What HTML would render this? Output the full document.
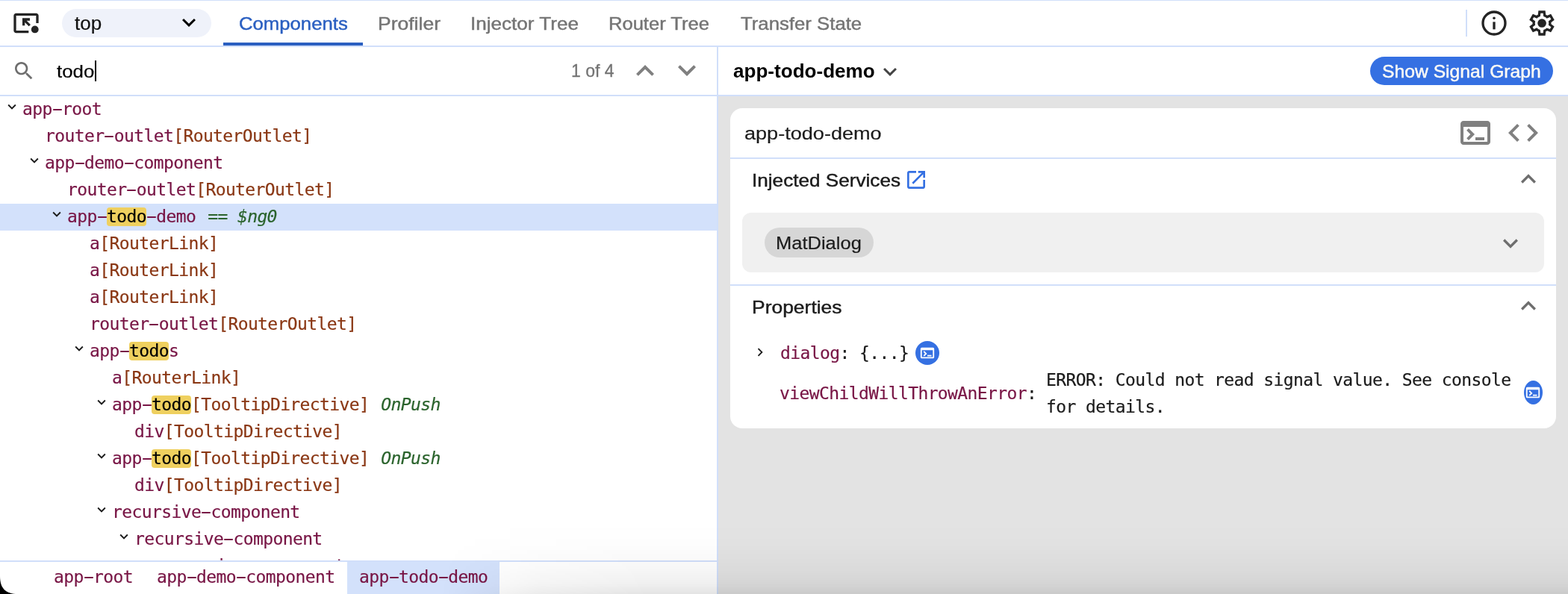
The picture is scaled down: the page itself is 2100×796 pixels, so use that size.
<!DOCTYPE html>
<html lang="en">
<head>
<meta charset="utf-8">
<title>Angular DevTools</title>
<style>
html,body{margin:0;padding:0;}
body{width:2100px;height:796px;overflow:hidden;background:#fff;position:relative;
  font-family:"Liberation Sans",sans-serif;color:#1b1b1b;}
#app{position:absolute;left:0;top:0;width:2100px;height:796px;overflow:hidden;}
.abs,.ln,.t,.m,svg.i{position:absolute;}
.ln{background:#d1dffa;}
.t{white-space:nowrap;line-height:40px;height:40px;font-size:25px;transform:translateZ(0);}
.sx{display:inline-block;transform-origin:0 50%;}
.m{white-space:nowrap;font-family:"DejaVu Sans Mono","Liberation Mono",monospace;font-size:23px;letter-spacing:-.605px;line-height:34px;height:36px;transform:translateZ(0);-webkit-text-stroke:.2px;}
.hy{display:inline-block;transform:translate(-.3px,-1px) scale(1.95,1.1);}
.el{color:#781545;}
.dir{color:#8a3714;}
.gr{color:#2a632c;font-style:italic;}
.ng{margin-left:2.76px;}
.op{margin-left:2.76px;}
.hl{color:#000;}
.hlb{position:absolute;background:#efd05f;border-radius:4px;height:25px;width:53px;}
.sel{background:#d3e1fb;}
</style>
</head>
<body>
<div id="app">

<!-- ===== top bar ===== -->
<div class="ln" style="left:0;top:0;width:2100px;height:1px"></div>
<div class="ln" style="left:0;top:61px;width:2100px;height:2px"></div>

<svg class="i" style="left:15px;top:11px" width="40" height="40" viewBox="0 0 960 960">
  <path fill="#242424" d="M160 800q-33 0-56.500-23.500T80 720V240q0-33 23.500-56.500T160 160h640q33 0 56.500 23.500T880 240v240h-80V240H160v480h400v80H160Z"/>
  <circle fill="#242424" cx="762" cy="682" r="118"/>
  <path fill="#242424" d="M360 320h240v80H496l128 128-56 56-128-128v104h-80V320Z"/>
</svg>

<div class="abs" style="left:83px;top:12px;width:200px;height:38px;border-radius:19px;background:#eff2fa"></div>
<div class="t" style="left:100px;top:11px;font-size:25px;color:#111;-webkit-text-stroke:0.2px #111;"><span class="sx" style="transform:scaleX(1.0397)">top</span></div>
<svg class="i" style="left:234.95px;top:11.8px" width="36" height="36" viewBox="0 0 24 24"><path fill="#000" d="M16.590 8.590 12 13.170 7.410 8.590 6 10l6 6 6-6z"/></svg>

<div class="t" style="left:319.59px;top:12px;font-size:24.5px;color:#2a5fc1;-webkit-text-stroke:0.45px #2a5fc1;"><span class="sx" style="transform:scaleX(1.0491)">Components</span></div>
<div class="abs" style="left:299px;top:57px;width:187px;height:4px;background:#2a5fc1"></div>
<div class="t" style="left:505.68px;top:12px;font-size:24.5px;color:#747474;-webkit-text-stroke:0.45px #747474;"><span class="sx" style="transform:scaleX(1.0818)">Profiler</span></div>
<div class="t" style="left:630.41px;top:12px;font-size:24.5px;color:#747474;-webkit-text-stroke:0.45px #747474;"><span class="sx" style="transform:scaleX(1.0644)">Injector Tree</span></div>
<div class="t" style="left:815.45px;top:12px;font-size:24.5px;color:#747474;-webkit-text-stroke:0.45px #747474;"><span class="sx" style="transform:scaleX(1.0428)">Router Tree</span></div>
<div class="t" style="left:992.14px;top:12px;font-size:24.5px;color:#747474;-webkit-text-stroke:0.45px #747474;"><span class="sx" style="transform:scaleX(1.0510)">Transfer State</span></div>

<div class="ln" style="left:1963px;top:13px;width:2px;height:36px"></div>
<svg class="i" style="left:1981px;top:11px" width="40" height="40" viewBox="0 0 960 960">
  <circle cx="480" cy="480" r="360" fill="none" stroke="#242424" stroke-width="80"/>
  <rect x="440" y="440" width="80" height="240" fill="#242424"/>
  <circle cx="480" cy="320" r="42" fill="#242424"/>
</svg>
<svg class="i" style="left:2045px;top:11px" width="40" height="40" viewBox="0 -960 960 960"><path fill="#242424" d="m370-80-16-128q-13-5-24.500-12T307-235l-119 50L78-375l103-78q-1-7-1-13.500v-27q0-6.500 1-13.500L78-585l110-190 119 50q11-8 23-15t24-12l16-128h220l16 128q13 5 24.500 12t22.500 15l119-50 110 190-103 78q1 7 1 13.500v27q0 6.500-2 13.500l103 78-110 190-118-50q-11 8-23 15t-24 12L590-80H370Zm70-80h79l14-106q31-8 57.500-23.500T639-327l99 41 39-68-86-65q5-14 7-29.500t2-31.500q0-16-2-31.500t-7-29.500l86-65-39-68-99 42q-22-23-48.500-38.500T533-694l-13-106h-79l-14 106q-31 8-57.500 23.500T321-633l-99-41-39 68 86 64q-5 15-7 30t-2 32q0 16 2 31t7 30l-86 65 39 68 99-42q22 23 48.500 38.500T427-266l13 106Zm42-180q58 0 99-41t41-99q0-58-41-99t-99-41q-59 0-99.500 41T342-480q0 58 40.500 99t99.500 41Z"/></svg>

<!-- ===== search / header row ===== -->
<div class="ln" style="left:0;top:127px;width:2100px;height:2px"></div>
<div class="ln" style="left:960px;top:63px;width:2px;height:733px"></div>

<svg class="i" style="left:16px;top:79px" width="32" height="32" viewBox="0 0 24 24"><path fill="#6e6e6e" d="M15.500 14h-.790l-.280-.270C15.410 12.590 16 11.110 16 9.500 16 5.910 13.090 3 9.500 3S3 5.910 3 9.500 5.910 16 9.500 16c1.610 0 3.090-.590 4.230-1.570l.270.280v.790l5 4.990L20.490 19l-4.990-5zm-6 0C7.010 14 5 11.990 5 9.500S7.010 5 9.500 5 14 7.010 14 9.500 11.990 14 9.500 14z"/></svg>
<div class="t" style="left:76.31px;top:76px;font-size:24px;color:#000;-webkit-text-stroke:0.2px #000;"><span class="sx" style="transform:scaleX(1.0760)">todo</span></div>
<div class="abs" style="left:127px;top:81px;width:2px;height:28px;background:#000"></div>
<div class="t" style="left:764.99px;top:75px;font-size:24px;color:#737373;-webkit-text-stroke:0.3px #737373;"><span class="sx" style="transform:scaleX(0.9559)">1 of 4</span></div>
<svg class="i" style="left:839.5px;top:71px" width="48" height="48" viewBox="0 0 24 24"><path fill="#808080" d="M12 8l-6 6 1.410 1.410L12 10.830l4.590 4.580L18 14z"/></svg>
<svg class="i" style="left:895.5px;top:69.8px" width="48" height="48" viewBox="0 0 24 24"><path fill="#808080" d="M16.590 8.590 12 13.170 7.410 8.590 6 10l6 6 6-6z"/></svg>

<div class="t" style="left:981.9px;top:75px;font-size:26.5px;font-weight:bold;color:#000;"><span class="sx" style="transform:scaleX(0.9837)">app-todo-demo</span></div>
<svg class="i" style="left:1174.35px;top:78.2px" width="36" height="36" viewBox="0 0 24 24"><path fill="#444" d="M16.590 8.590 12 13.170 7.410 8.590 6 10l6 6 6-6z"/></svg>
<div class="abs" style="left:1835px;top:76px;width:245px;height:38px;border-radius:19px;background:#3570e2"></div>
<div class="t" style="left:1850.52px;top:76px;font-size:24.5px;color:#fdfbf6;-webkit-text-stroke:0.45px #fdfbf6;"><span class="sx" style="transform:scaleX(1.0080)">Show Signal Graph</span></div>

<!-- ===== component tree ===== -->
<div class="abs" style="left:0;top:129px;width:960px;height:622px;overflow:hidden">
<svg class="i" style="left:5.4px;top:2.8px" width="22" height="22" viewBox="0 0 24 24"><path fill="#1b1b1b" d="M16.590 8.590 12 13.170 7.410 8.590 6 10l6 6 6-6z"/></svg>
<div class="m" style="left:30px;top:0px"><span class="el">app<span class="hy">-</span>root</span></div>
<div class="m" style="left:60px;top:36px"><span class="el">router<span class="hy">-</span>outlet</span><span class="dir">[RouterOutlet]</span></div>
<svg class="i" style="left:35.4px;top:74.8px" width="22" height="22" viewBox="0 0 24 24"><path fill="#1b1b1b" d="M16.590 8.590 12 13.170 7.410 8.590 6 10l6 6 6-6z"/></svg>
<div class="m" style="left:60px;top:72px"><span class="el">app<span class="hy">-</span>demo<span class="hy">-</span>component</span></div>
<div class="m" style="left:90px;top:108px"><span class="el">router<span class="hy">-</span>outlet</span><span class="dir">[RouterOutlet]</span></div>
<div class="abs sel" style="left:0;top:144px;width:960px;height:36px"></div>
<svg class="i" style="left:65.4px;top:146.8px" width="22" height="22" viewBox="0 0 24 24"><path fill="#1b1b1b" d="M16.590 8.590 12 13.170 7.410 8.590 6 10l6 6 6-6z"/></svg>
<div class="hlb" style="left:143.0px;top:149px"></div>
<div class="m" style="left:90px;top:144px"><span class="el">app<span class="hy">-</span><span class="hl">todo</span><span class="hy">-</span>demo</span> <span class="gr ng">== $ng0</span></div>
<div class="m" style="left:120px;top:180px"><span class="el">a</span><span class="dir">[RouterLink]</span></div>
<div class="m" style="left:120px;top:216px"><span class="el">a</span><span class="dir">[RouterLink]</span></div>
<div class="m" style="left:120px;top:252px"><span class="el">a</span><span class="dir">[RouterLink]</span></div>
<div class="m" style="left:120px;top:288px"><span class="el">router<span class="hy">-</span>outlet</span><span class="dir">[RouterOutlet]</span></div>
<svg class="i" style="left:95.4px;top:326.8px" width="22" height="22" viewBox="0 0 24 24"><path fill="#1b1b1b" d="M16.590 8.590 12 13.170 7.410 8.590 6 10l6 6 6-6z"/></svg>
<div class="hlb" style="left:173.0px;top:329px"></div>
<div class="m" style="left:120px;top:324px"><span class="el">app<span class="hy">-</span><span class="hl">todo</span>s</span></div>
<div class="m" style="left:150px;top:360px"><span class="el">a</span><span class="dir">[RouterLink]</span></div>
<svg class="i" style="left:125.4px;top:398.8px" width="22" height="22" viewBox="0 0 24 24"><path fill="#1b1b1b" d="M16.590 8.590 12 13.170 7.410 8.590 6 10l6 6 6-6z"/></svg>
<div class="hlb" style="left:203.0px;top:401px"></div>
<div class="m" style="left:150px;top:396px"><span class="el">app<span class="hy">-</span><span class="hl">todo</span></span><span class="dir">[TooltipDirective]</span> <span class="gr op">OnPush</span></div>
<div class="m" style="left:180px;top:432px"><span class="el">div</span><span class="dir">[TooltipDirective]</span></div>
<svg class="i" style="left:125.4px;top:470.8px" width="22" height="22" viewBox="0 0 24 24"><path fill="#1b1b1b" d="M16.590 8.590 12 13.170 7.410 8.590 6 10l6 6 6-6z"/></svg>
<div class="hlb" style="left:203.0px;top:473px"></div>
<div class="m" style="left:150px;top:468px"><span class="el">app<span class="hy">-</span><span class="hl">todo</span></span><span class="dir">[TooltipDirective]</span> <span class="gr op">OnPush</span></div>
<div class="m" style="left:180px;top:504px"><span class="el">div</span><span class="dir">[TooltipDirective]</span></div>
<svg class="i" style="left:125.4px;top:542.8px" width="22" height="22" viewBox="0 0 24 24"><path fill="#1b1b1b" d="M16.590 8.590 12 13.170 7.410 8.590 6 10l6 6 6-6z"/></svg>
<div class="m" style="left:150px;top:540px"><span class="el">recursive<span class="hy">-</span>component</span></div>
<svg class="i" style="left:155.4px;top:578.8px" width="22" height="22" viewBox="0 0 24 24"><path fill="#1b1b1b" d="M16.590 8.590 12 13.170 7.410 8.590 6 10l6 6 6-6z"/></svg>
<div class="m" style="left:180px;top:576px"><span class="el">recursive<span class="hy">-</span>component</span></div>
<svg class="i" style="left:185.4px;top:614.8px" width="22" height="22" viewBox="0 0 24 24"><path fill="#1b1b1b" d="M16.590 8.590 12 13.170 7.410 8.590 6 10l6 6 6-6z"/></svg>
<div class="m" style="left:210px;top:612px"><span class="el">recursive<span class="hy">-</span>component</span></div>
</div>

<!-- ===== breadcrumbs ===== -->
<div class="ln" style="left:0;top:751px;width:960px;height:2px"></div>
<div class="abs" style="left:465px;top:753px;width:204px;height:43px;background:#d3e1fb"></div>
<div class="m el" style="left:72px;top:756px">app<span class="hy">-</span>root</div>
<div class="m el" style="left:210px;top:756px">app<span class="hy">-</span>demo<span class="hy">-</span>component</div>
<div class="m el" style="left:481px;top:756px">app<span class="hy">-</span>todo<span class="hy">-</span>demo</div>

<!-- ===== right panel ===== -->
<div class="abs" style="left:962px;top:129px;width:1138px;height:667px;background:#e3e3e3"></div>
<div class="abs" style="left:978px;top:145px;width:1106px;height:429px;border-radius:16px;background:#fff"></div>

<div class="t" style="left:997.21px;top:159px;font-size:24.5px;color:#1b1b1b;-webkit-text-stroke:0.2px #1b1b1b;"><span class="sx" style="transform:scaleX(1.1054)">app-todo-demo</span></div>
<svg class="i" style="left:1952px;top:154px" width="48" height="48" viewBox="0 -960 960 960"><path fill="#808080" d="M160-160q-33 0-56.500-23.500T80-240v-480q0-33 23.500-56.500T160-800h640q33 0 56.500 23.500T880-720v480q0 33-23.500 56.500T800-160H160Zm0-80h640v-400H160v400Zm140-40-56-56 103-104-104-104 57-56 160 160-160 160Zm180 0v-80h240v80H480Z"/></svg>
<svg class="i" style="left:2016.2px;top:154px" width="48" height="48" viewBox="0 0 24 24"><path fill="#808080" d="M9.400 16.600 4.800 12l4.600-4.600L8 6l-6 6 6 6 1.400-1.400zm5.200 0 4.600-4.600-4.600-4.600L16 6l6 6-6 6-1.400-1.400z"/></svg>
<div class="ln" style="left:978px;top:211px;width:1106px;height:2px"></div>

<div class="t" style="left:1006.51px;top:222px;font-size:24.5px;color:#1b1b1b;-webkit-text-stroke:0.45px #1b1b1b;"><span class="sx" style="transform:scaleX(1.0668)">Injected Services</span></div>
<svg class="i" style="left:1210.5px;top:225px" width="32" height="32" viewBox="0 0 24 24"><path fill="#3570e2" d="M19 19H5V5h7V3H5c-1.110 0-2 .9-2 2v14c0 1.100.890 2 2 2h14c1.100 0 2-.9 2-2v-7h-2v7zM14 3v2h3.590l-9.830 9.830 1.410 1.410L19 6.410V10h2V3h-7z"/></svg>
<svg class="i" style="left:2027.2px;top:220px" width="40" height="40" viewBox="0 0 24 24"><path fill="#6e6e6e" d="M12 8l-6 6 1.410 1.410L12 10.830l4.590 4.580L18 14z"/></svg>

<div class="abs" style="left:994px;top:285px;width:1074px;height:80px;border-radius:12px;background:#f0f0f0"></div>
<div class="abs" style="left:1024px;top:305px;width:146px;height:40px;border-radius:20px;background:#d6d6d6"></div>
<div class="t" style="left:1039.32px;top:306px;font-size:24.5px;color:#1b1b1b;-webkit-text-stroke:0.2px #1b1b1b;"><span class="sx" style="transform:scaleX(1.0410)">MatDialog</span></div>
<svg class="i" style="left:2003px;top:306.2px" width="40" height="40" viewBox="0 0 24 24"><path fill="#6e6e6e" d="M16.590 8.590 12 13.170 7.410 8.590 6 10l6 6 6-6z"/></svg>
<div class="ln" style="left:978px;top:381px;width:1106px;height:2px"></div>

<div class="t" style="left:1006.58px;top:392px;font-size:24.5px;color:#1b1b1b;-webkit-text-stroke:0.45px #1b1b1b;"><span class="sx" style="transform:scaleX(1.0795)">Properties</span></div>
<svg class="i" style="left:2027.3px;top:389.6px" width="40" height="40" viewBox="0 0 24 24"><path fill="#6e6e6e" d="M12 8l-6 6 1.410 1.410L12 10.830l4.590 4.580L18 14z"/></svg>

<svg class="i" style="left:1007.3px;top:461px" width="22" height="22" viewBox="0 0 24 24"><path fill="#1b1b1b" d="M10 6 8.590 7.410 13.170 12l-4.580 4.590L10 18l6-6z"/></svg>
<div class="m" style="left:1045px;top:456px"><span class="el">dialog</span>: {...}</div>
<div class="abs" style="left:1226px;top:457px;width:32px;height:32px;border-radius:50%;background:#3570e2"></div>
<svg class="i" style="left:1231px;top:462px" width="22" height="22" viewBox="0 -960 960 960"><path fill="#fff" d="M160-160q-33 0-56.500-23.500T80-240v-480q0-33 23.500-56.500T160-800h640q33 0 56.500 23.500T880-720v480q0 33-23.500 56.500T800-160H160Zm0-80h640v-400H160v400Zm140-40-56-56 103-104-104-104 57-56 160 160-160 160Zm180 0v-80h240v80H480Z"/></svg>

<div class="m" style="left:1044px;top:510px"><span class="el">viewChildWillThrowAnError</span>:</div>
<div class="m" style="left:1401px;top:492px">ERROR: Could not read signal value. See console</div>
<div class="m" style="left:1401px;top:528px">for details.</div>
<div class="abs" style="left:2041px;top:510px;width:25px;height:32px;border-radius:50%;background:#3570e2"></div>
<svg class="i" style="left:2042.2px;top:515.2px" width="22" height="22" viewBox="0 -960 960 960"><path fill="#fff" d="M160-160q-33 0-56.500-23.500T80-240v-480q0-33 23.500-56.500T160-800h640q33 0 56.500 23.500T880-720v480q0 33-23.500 56.500T800-160H160Zm0-80h640v-400H160v400Zm140-40-56-56 103-104-104-104 57-56 160 160-160 160Zm180 0v-80h240v80H480Z"/></svg>

<!-- bottom shadow + window corner -->
<div class="abs" style="left:590px;top:700px;width:1510px;height:96px;background:linear-gradient(to bottom,rgba(0,0,0,0) 0%,rgba(0,0,0,.008) 30%,rgba(0,0,0,.028) 60%,rgba(0,0,0,.06) 85%,rgba(0,0,0,.105) 100%);-webkit-mask-image:linear-gradient(to right,rgba(0,0,0,0) 0,rgba(0,0,0,.7) 130px,#000 280px);mask-image:linear-gradient(to right,rgba(0,0,0,0) 0,rgba(0,0,0,.7) 130px,#000 280px);pointer-events:none"></div>
<svg class="i" style="left:0;top:772px" width="24" height="24" viewBox="0 0 24 24"><path fill="#000" d="M0 0C0 16.500 7.500 24 24 24H0z"/></svg>

</div>
</body>
</html>
